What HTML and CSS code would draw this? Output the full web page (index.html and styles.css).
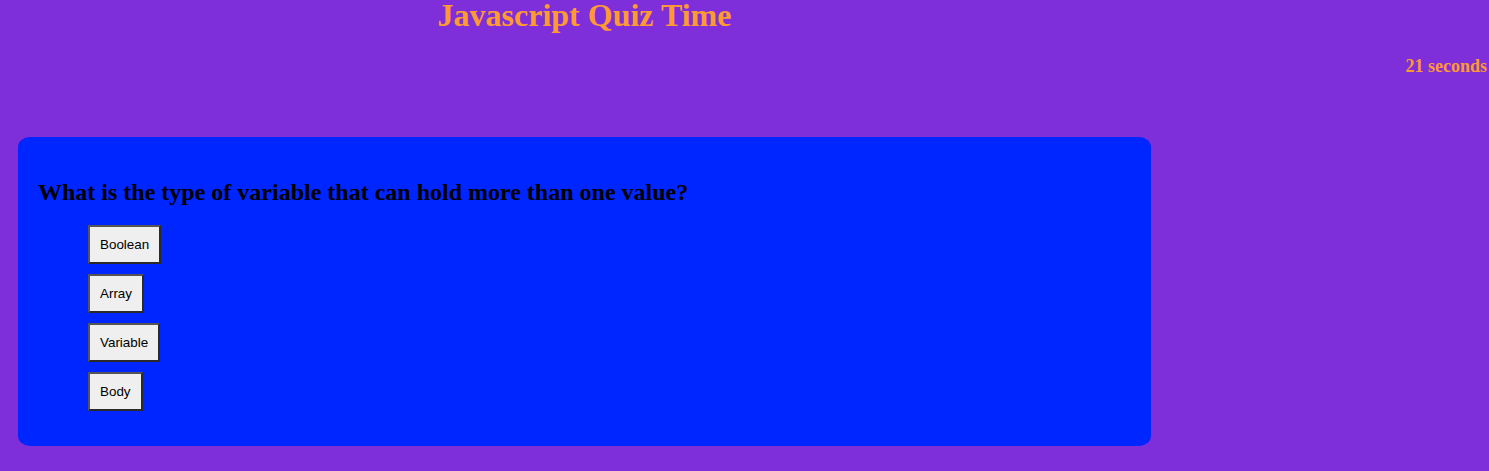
FILE: index.html
```html
<!DOCTYPE html>
<html>
<head>
<meta charset="utf-8">
<link rel="stylesheet" href="styles.css">
</head>
<body>
<header class="top">
  <h1 class="title">Javascript Quiz Time</h1>
</header>
<div class="timer-row"><span class="timer">21 seconds</span></div>
<main class="card">
  <h2 class="question">What is the type of variable that can hold more than one value?</h2>
  <ul class="answers">
    <li><button class="answer">Boolean</button></li>
    <li><button class="answer">Array</button></li>
    <li><button class="answer">Variable</button></li>
    <li><button class="answer">Body</button></li>
  </ul>
</main>
</body>
</html>
```
FILE: styles.css
```css
html, body {
  margin: 0;
  padding: 0;
}
body {
  background: #7f2fd9;
  font-family: "Liberation Serif", "Times New Roman", serif;
  width: 1489px;
  height: 471px;
  overflow: hidden;
}
.top {
  width: 1169px;
  display: flex;
  justify-content: center;
}
.title {
  margin: 0;
  font-size: 32px;
  font-weight: bold;
  color: #ff9a33;
  line-height: 31px;
}
.timer-row {
  display: flex;
  justify-content: flex-end;
  padding: 25px 2px 0 0;
}
.timer {
  color: #ff9a33;
  font-weight: bold;
  font-size: 18px;
}
.card {
  margin: 60px 0 0 18px;
  width: 1093px;
  padding: 20px 20px 35px 20px;
  background: #0026ff;
  border-radius: 12px / 10px;
}
.question {
  margin: 22px 0 19px 0;
  font-size: 24px;
  font-weight: bold;
  color: #000;
}
.answers {
  list-style: none;
  margin: 0;
  padding: 0 0 0 50px;
  display: flex;
  flex-direction: column;
  align-items: flex-start;
  gap: 10px;
}
.answer {
  font-family: "Liberation Sans", Arial, sans-serif;
  font-size: 13.4px;
  color: #000;
  background: #efefef;
  border-width: 2px;
  border-style: solid;
  border-color: #555 #2a2a2a #2a2a2a #555;
  padding: 0 10px;
  height: 39px;
}
```
